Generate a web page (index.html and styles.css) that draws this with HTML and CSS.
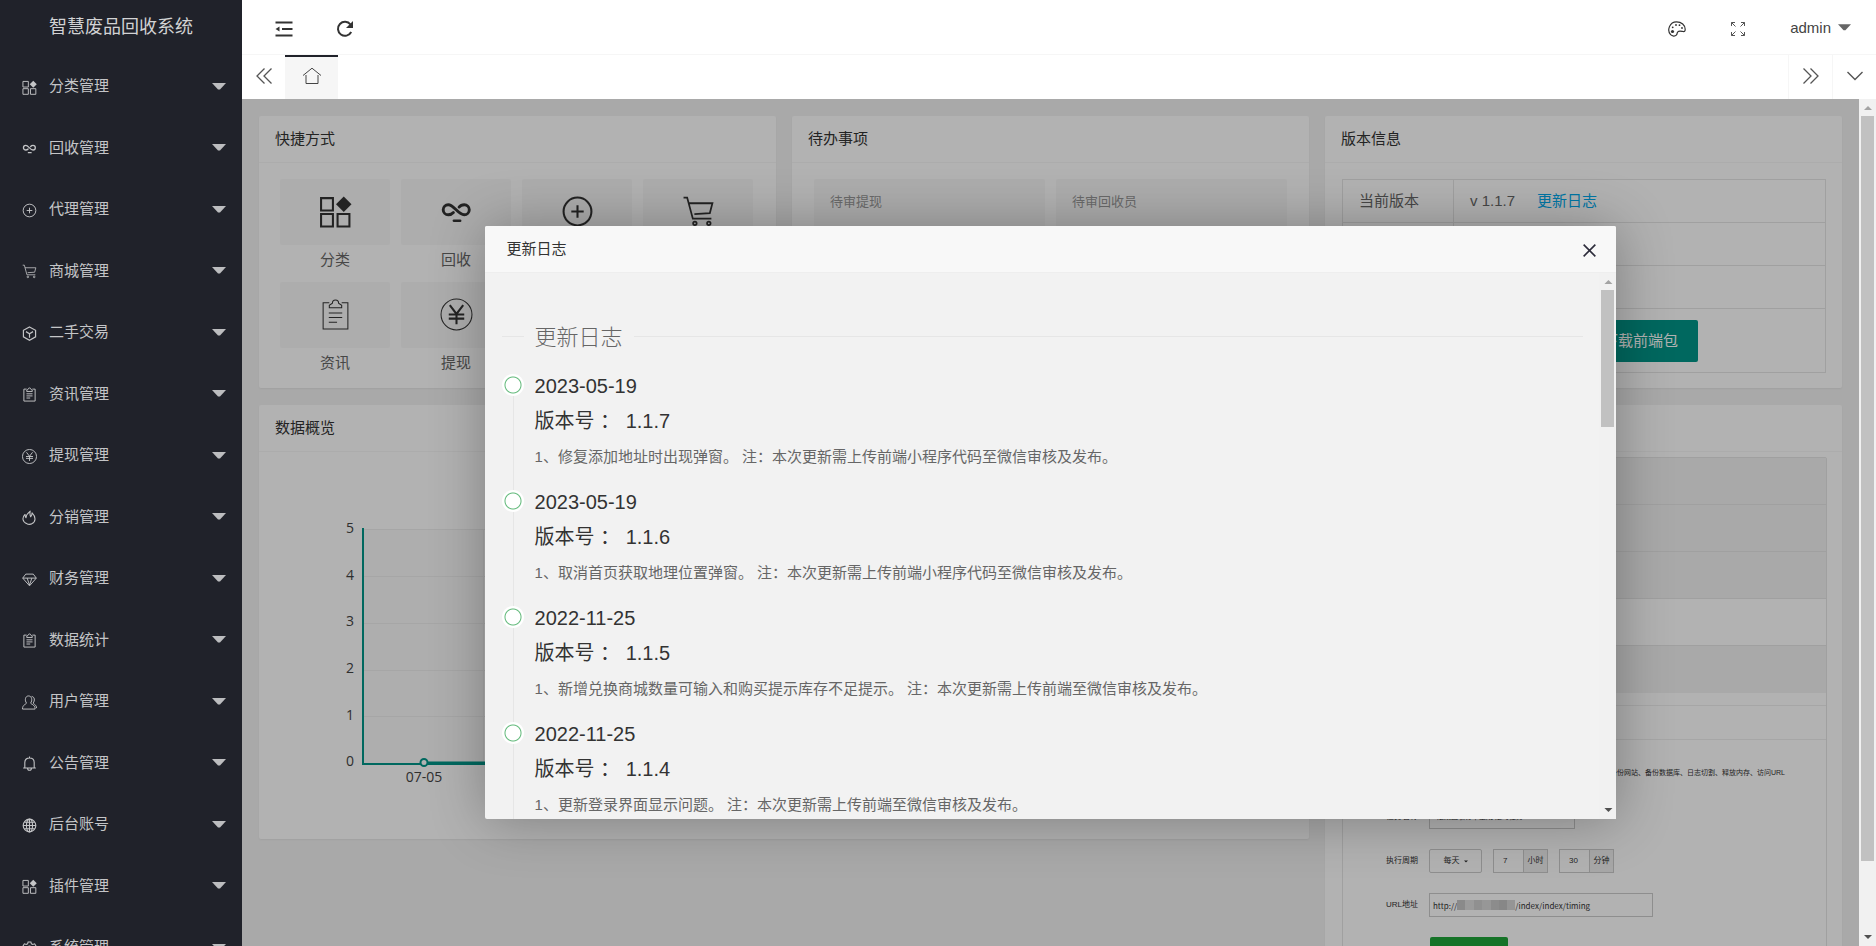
FILE: index.html
```html
<!DOCTYPE html>
<html lang="zh-CN">
<head>
<meta charset="utf-8">
<title>智慧废品回收系统</title>
<link rel="stylesheet" href="styles.css">
</head>
<body>
<svg class="sprite" aria-hidden="true">
  <symbol id="i-grid" viewBox="0 0 32 32"><g fill="none" stroke="currentColor" stroke-width="2"><path d="M2 3h11.500v12h-11.500zM2 18.500h11.500v12h-11.500zM18 18.500h11.500v12h-11.500z"/></g><path fill="currentColor" d="M24 1.500l7.500 7.500-7.500 7.500-7.500-7.500z"/></symbol>
  <symbol id="i-loop" viewBox="0 0 32 32"><path fill="none" stroke="currentColor" stroke-width="2.800" stroke-linecap="round" d="M13 17c-1.500 1.700-3 2.200-5 2.200a4.900 4.900 0 0 1 0-9.800c5.500 0 9.500 9.800 15.500 9.800a4.900 4.900 0 0 0 0-9.800c-2.200 0-3.700.6-5 2.300"/><path stroke="currentColor" stroke-width="2.600" stroke-linecap="round" d="M13.500 25h6"/></symbol>
  <symbol id="i-plus" viewBox="0 0 32 32"><g fill="none" stroke="currentColor" stroke-width="2"><circle cx="16" cy="16" r="13.500"/><path d="M16 10v12M10 16h12"/></g></symbol>
  <symbol id="i-cart" viewBox="0 0 32 32"><g fill="none" stroke="currentColor" stroke-width="1.700"><path d="M1.500 2.500h3.500l5.500 20.500h18M6.500 8h23l-2.500 9.500-15 1"/><circle cx="12.500" cy="27.500" r="1.700"/><circle cx="26" cy="27.500" r="1.700"/></g></symbol>
  <symbol id="i-cube" viewBox="0 0 32 32"><g fill="none" stroke="currentColor" stroke-width="2.500"><path d="M16 2l13 7.200v14l-13 7.300-13-7.300v-14z"/><path d="M8.500 12l7.500 4.500 7.500-4.500M16 16.500v8.500"/></g></symbol>
  <symbol id="i-note" viewBox="0 0 32 32"><g fill="none" stroke="currentColor"><path d="M10 4.500h-6v25.500h24v-25.500h-6M10 9.500v-2.500l3-2c0-4 6-4 6 0l3 2v2.500zM9.500 14.500h13M9.500 19h13M9.500 23.500h8"/></g></symbol>
  <symbol id="i-yen" viewBox="0 0 32 32"><circle cx="16" cy="16" r="15" fill="none" stroke="currentColor"/><path fill="none" stroke="currentColor" stroke-width="2" d="M9.500 7l6.500 8.500 6.500-8.500M8.500 16h15M8.500 20h15M16 15v10.500"/></symbol>
  <symbol id="i-fire" viewBox="0 0 32 32"><path fill="none" stroke="currentColor" stroke-width="2.300" stroke-linejoin="round" d="M11 29.500c-11-4-11-14-4.500-20 0 3 .5 5 2 7 .5-5 4-10 9-14-1 4-.5 8 1 12 2-2 3-5 3-8.500 9 9 8 20-1 23.500M10 29.500c4 1.500 8 1.500 11.500 0"/></symbol>
  <symbol id="i-gem" viewBox="0 0 32 32"><path fill="none" stroke="currentColor" stroke-width="2" stroke-linejoin="round" d="M8 4.500h16l6.500 8.500-14.500 16.500-14.500-16.500zM1.500 13h29M11 13l5 15 5-15"/></symbol>
  <symbol id="i-users" viewBox="0 0 32 32"><path fill="none" stroke="currentColor" stroke-width="2" d="M9.500 17c-4-5-3-15 4.500-15s8.500 10 4.500 15c0 3 9.500 3 9.500 13h-27c0-10 8.500-10 8.500-13zM20.500 3c7 1 7 9 3.500 14 0 3 7 3 7 11"/></symbol>
  <symbol id="i-bell" viewBox="0 0 32 32"><path fill="none" stroke="currentColor" stroke-width="2.300" d="M2.500 25.500h27M6 25v-11c0-13 20-13 20 0v11M16 1v3M12 26c0 6 8 6 8 0"/></symbol>
  <symbol id="i-globe" viewBox="0 0 32 32"><g fill="none" stroke="currentColor" stroke-width="2.400"><circle cx="16" cy="16" r="13.500"/><ellipse cx="16" cy="16" rx="6.500" ry="13.500"/><path d="M16 2.500v27M2.500 16h27M5 9h22M5 23h22"/></g></symbol>
  <symbol id="i-gear" viewBox="0 0 32 32"><g fill="none" stroke="currentColor" stroke-width="2.300"><path d="M13 2h6l1 4 3 1.500 4-1.500 3 5-3 3v4l3 3-3 5-4-1.500-3 1.500-1 4h-6l-1-4-3-1.500-4 1.500-3-5 3-3v-4l-3-3 3-5 4 1.500 3-1.500z"/><circle cx="16" cy="16" r="5"/></g></symbol>
  <symbol id="i-caret" viewBox="0 0 14 7"><path fill="currentColor" d="M0 0h14l-6 6.500h-2z"/></symbol>
  <symbol id="i-indent" viewBox="0 0 18 16"><path fill="none" stroke="currentColor" stroke-width="2" d="M.5 1.500h17M7 8h10.500M.5 14.500h17"/><path fill="currentColor" d="M.5 8l4-2.500v5z"/></symbol>
  <symbol id="i-refresh" viewBox="0 0 18 18"><path fill="none" stroke="currentColor" stroke-width="2" d="M15.200 12a7 7 0 1 1-.7-7.500"/><path fill="currentColor" d="M17 1v7h-7z"/></symbol>
  <symbol id="i-palette" viewBox="0 0 18 16"><path fill="none" stroke="currentColor" stroke-width="1.200" d="M8.500.8c5 0 8.700 3.500 8.700 7.500 0 2-.8 2.500-2.200 2.200-2.500-.5-4-1-5.200.3-1 1.200-.3 2.200-1.500 3.400-1.300 1.300-4 1.200-5.700-.5-4-4.300-1-12.900 5.900-12.900z"/><g fill="currentColor"><circle cx="4.500" cy="10.500" r="1.600"/><circle cx="4.700" cy="6.300" r=".9"/><circle cx="8" cy="4" r=".9"/><circle cx="11.500" cy="4.200" r=".9"/><circle cx="14" cy="7" r=".9"/></g></symbol>
  <symbol id="i-full" viewBox="0 0 16 16"><path fill="none" stroke="currentColor" d="M1.500 5v-3.500h3.500M1.500 1.500l4 4M11 1.500h3.500v3.500M14.500 1.500l-4 4M1.500 11v3.500h3.500M1.500 14.500l4-4M11 14.500h3.500v-3.500M14.500 14.500l-4-4"/></symbol>
  <symbol id="i-left" viewBox="0 0 16 16"><path fill="none" stroke="currentColor" stroke-width="1.300" d="M8.500.5l-7.500 7.500 7.500 7.500M15.500.5l-7.500 7.500 7.500 7.500"/></symbol>
  <symbol id="i-right" viewBox="0 0 16 16"><path fill="none" stroke="currentColor" stroke-width="1.300" d="M.5.5l7.500 7.500-7.500 7.500M7.500.5l7.500 7.500-7.500 7.500"/></symbol>
  <symbol id="i-down" viewBox="0 0 16 16"><path fill="none" stroke="currentColor" stroke-width="1.400" d="M.5 4l7.500 7.500 7.500-7.500"/></symbol>
  <symbol id="i-home" viewBox="0 0 18 18"><path fill="none" stroke="currentColor" d="M0 8.500l9-7.300 9 7.300M3 8v8.500h12v-8.500"/></symbol>
  <symbol id="i-close" viewBox="0 0 12 12"><path fill="none" stroke="currentColor" stroke-width="1.500" d="M.6.600l10.800 10.800M11.400.600l-10.800 10.800"/></symbol>
</svg>

<div class="app">
  <aside class="side">
    <h1 class="brand">智慧废品回收系统</h1>
    <nav>
      <ul class="menu">
        <li><a href="#"><svg class="mi"><use href="#i-grid"/></svg>分类管理<svg class="caret"><use href="#i-caret"/></svg></a></li>
        <li><a href="#"><svg class="mi"><use href="#i-loop"/></svg>回收管理<svg class="caret"><use href="#i-caret"/></svg></a></li>
        <li><a href="#"><svg class="mi"><use href="#i-plus"/></svg>代理管理<svg class="caret"><use href="#i-caret"/></svg></a></li>
        <li><a href="#"><svg class="mi"><use href="#i-cart"/></svg>商城管理<svg class="caret"><use href="#i-caret"/></svg></a></li>
        <li><a href="#"><svg class="mi"><use href="#i-cube"/></svg>二手交易<svg class="caret"><use href="#i-caret"/></svg></a></li>
        <li><a href="#"><svg class="mi"><use href="#i-note"/></svg>资讯管理<svg class="caret"><use href="#i-caret"/></svg></a></li>
        <li><a href="#"><svg class="mi"><use href="#i-yen"/></svg>提现管理<svg class="caret"><use href="#i-caret"/></svg></a></li>
        <li><a href="#"><svg class="mi"><use href="#i-fire"/></svg>分销管理<svg class="caret"><use href="#i-caret"/></svg></a></li>
        <li><a href="#"><svg class="mi"><use href="#i-gem"/></svg>财务管理<svg class="caret"><use href="#i-caret"/></svg></a></li>
        <li><a href="#"><svg class="mi"><use href="#i-note"/></svg>数据统计<svg class="caret"><use href="#i-caret"/></svg></a></li>
        <li><a href="#"><svg class="mi"><use href="#i-users"/></svg>用户管理<svg class="caret"><use href="#i-caret"/></svg></a></li>
        <li><a href="#"><svg class="mi"><use href="#i-bell"/></svg>公告管理<svg class="caret"><use href="#i-caret"/></svg></a></li>
        <li><a href="#"><svg class="mi"><use href="#i-globe"/></svg>后台账号<svg class="caret"><use href="#i-caret"/></svg></a></li>
        <li><a href="#"><svg class="mi"><use href="#i-grid"/></svg>插件管理<svg class="caret"><use href="#i-caret"/></svg></a></li>
        <li><a href="#"><svg class="mi"><use href="#i-gear"/></svg>系统管理<svg class="caret"><use href="#i-caret"/></svg></a></li>
      </ul>
    </nav>
  </aside>

  <div class="main">
    <header class="top">
      <button class="tool" aria-label="侧边伸缩"><svg class="ti"><use href="#i-indent"/></svg></button>
      <button class="tool" aria-label="刷新"><svg class="ti"><use href="#i-refresh"/></svg></button>
      <span class="spring"></span>
      <button class="tool" aria-label="主题"><svg class="ti"><use href="#i-palette"/></svg></button>
      <button class="tool" aria-label="全屏"><svg class="ti small"><use href="#i-full"/></svg></button>
      <button class="user">admin<svg class="caret"><use href="#i-caret"/></svg></button>
    </header>
    <div class="tabs">
      <button class="tabctl" aria-label="向左"><svg class="tci"><use href="#i-left"/></svg></button>
      <button class="tab" aria-label="首页"><svg class="home"><use href="#i-home"/></svg></button>
      <span class="spring"></span>
      <button class="tabctl line" aria-label="向右"><svg class="tci"><use href="#i-right"/></svg></button>
      <button class="tabctl line" aria-label="更多"><svg class="tci"><use href="#i-down"/></svg></button>
    </div>

    <div class="view">
      <div class="stage">
        <main class="cards">
          <section class="card">
            <h2>快捷方式</h2>
            <div class="shortcuts">
              <a href="#"><span class="tile"><svg><use href="#i-grid"/></svg></span>分类</a>
              <a href="#"><span class="tile"><svg><use href="#i-loop"/></svg></span>回收</a>
              <a href="#"><span class="tile"><svg><use href="#i-plus"/></svg></span>代理</a>
              <a href="#"><span class="tile"><svg><use href="#i-cart"/></svg></span>商城</a>
              <a href="#"><span class="tile"><svg><use href="#i-note"/></svg></span>资讯</a>
              <a href="#"><span class="tile"><svg><use href="#i-yen"/></svg></span>提现</a>
            </div>
          </section>
          <section class="card">
            <h2>待办事项</h2>
            <div class="todos">
              <a href="#">待审提现</a>
              <a href="#">待审回收员</a>
            </div>
          </section>
          <section class="card">
            <h2>版本信息</h2>
            <div class="version">
              <table>
                <tr><td class="key">当前版本</td><td>v 1.1.7<a href="#">更新日志</a></td></tr>
                <tr><td></td><td></td></tr>
                <tr><td></td><td></td></tr>
                <tr class="tall"><td></td><td><button class="download">下载前端包</button></td></tr>
              </table>
            </div>
          </section>
          <section class="card wide">
            <h2>数据概览</h2>
            <svg class="chart" role="img" aria-label="数据概览">
              <g class="bands"><rect x="104" y="77" width="120" height="235"/><rect x="344" y="77" width="120" height="235"/><rect x="584" y="77" width="120" height="235"/></g>
              <g class="gridlines"><path d="M104 77.500h844M104 124.500h844M104 171.500h844M104 218.500h844M104 264.500h844M224.500 77v235M344.500 77v235"/></g>
              <path class="axis" d="M104 76v236h844"/>
              <path class="series" d="M165 311h722"/>
              <circle class="dot" cx="165" cy="310.500" r="3.500"/>
              <g class="ylabels"><text x="95" y="81">5</text><text x="95" y="128">4</text><text x="95" y="174">3</text><text x="95" y="221">2</text><text x="95" y="268">1</text><text x="95" y="314">0</text></g>
              <text class="xlabel" x="165" y="330">07-05</text>
            </svg>
          </section>
          <section class="card">
            <h2></h2>
            <div class="panelwrap">
              <div class="panel">
                <div class="bar"></div>
                <div class="bar"></div>
                <div class="bar"></div>
                <div class="bar open"></div>
                <div class="bar"></div>
                <form class="task">
                  <div class="taskhead"></div>
                  <p class="kinds">备份网站、备份数据库、日志切割、释放内存、访问URL</p>
                  <div class="row"><label for="t-name">任务名称</label><input id="t-name" class="name" type="text" value="定期回收订单生成 定时任务"></div>
                  <div class="row"><label for="t-cycle">执行周期</label><button type="button" id="t-cycle" class="cycle">每天<svg><use href="#i-caret"/></svg></button><span class="unit"><input type="text" aria-label="小时" value="7"><span>小时</span></span><span class="unit"><input type="text" aria-label="分钟" value="30"><span>分钟</span></span></div>
                  <div class="row"><label for="t-url">URL地址</label><span class="url">http://<svg class="mosaic"><rect width="8" height="10" fill="#c6c6c6"/><rect x="8" width="9" height="10" fill="#dedede"/><rect x="17" width="8" height="10" fill="#cecece"/><rect x="25" width="9" height="10" fill="#d9d9d9"/><rect x="34" width="8" height="10" fill="#c9c9c9"/><rect x="42" width="8" height="10" fill="#c2c2c2"/><rect x="50" width="8" height="10" fill="#d6d6d6"/></svg><input id="t-url" type="text" value="/index/index/timing"></span></div>
                  <button type="button" class="run" aria-label="提交"></button>
                </form>
              </div>
            </div>
          </section>
        </main>

        <div class="shade"></div>
        <div class="dialog" role="dialog" aria-labelledby="dlg-title">
          <div class="dialoghead"><h2 id="dlg-title">更新日志</h2><button aria-label="关闭"><svg><use href="#i-close"/></svg></button></div>
          <div class="dialogbody">
            <div class="log">
              <fieldset><legend>更新日志</legend></fieldset>
              <ul class="timeline">
                <li><h3>2023-05-19</h3><h3>版本号 ： 1.1.7</h3><p>1、修复添加地址时出现弹窗。 注：本次更新需上传前端小程序代码至微信审核及发布。</p></li>
                <li><h3>2023-05-19</h3><h3>版本号 ： 1.1.6</h3><p>1、取消首页获取地理位置弹窗。 注：本次更新需上传前端小程序代码至微信审核及发布。</p></li>
                <li><h3>2022-11-25</h3><h3>版本号 ： 1.1.5</h3><p>1、新增兑换商城数量可输入和购买提示库存不足提示。 注：本次更新需上传前端至微信审核及发布。</p></li>
                <li><h3>2022-11-25</h3><h3>版本号 ： 1.1.4</h3><p>1、更新登录界面显示问题。 注：本次更新需上传前端至微信审核及发布。</p></li>
              </ul>
            </div>
            <div class="scroll"><i class="up"></i><i class="thumb short"></i><i class="fill"></i><i class="down"></i></div>
          </div>
        </div>
      </div>
      <div class="scroll"><i class="up"></i><i class="thumb long"></i><i class="fill"></i><i class="down"></i></div>
    </div>
  </div>
</div>
</body>
</html>
```
FILE: styles.css
```css
*, *::before, *::after { box-sizing: border-box; margin: 0; padding: 0; }
body {
  font: 15px/24px "Liberation Sans", "Noto Sans CJK SC", sans-serif;
  color: #333;
  background: #f2f2f2;
}
button, input { font: inherit; color: inherit; background: none; border: 0; }
a { color: inherit; text-decoration: none; }
ul { list-style: none; }
h1, h2, h3 { font-weight: 400; }
.sprite { display: none; }
.spring { flex: 1; }

.app { display: flex; height: 100vh; overflow: hidden; }

/* sidebar */
.side { flex: none; width: 242px; background: #20222a; color: #c4c5c7; overflow: hidden; }
.brand { height: 55px; font-size: 18px; line-height: 55px; text-align: center; color: #d2d3d4; }
.menu li { height: 61px; }
.menu li:nth-child(odd) { height: 62px; }
.menu a { display: flex; align-items: center; height: 100%; padding: 0 16px 0 22px; }
.mi { width: 15px; height: 15px; margin: 2px 12px 0 0; stroke-width: 2px; }
.caret { width: 14px; height: 7px; }
.menu .caret { margin-left: auto; color: #bcbdbf; }

/* top bars */
.main { flex: 1; min-width: 0; display: flex; flex-direction: column; }
.top { display: flex; align-items: center; height: 55px; padding: 0 25px 8px 11px; background: #fff; border-bottom: 1px solid #f6f6f6; }
.top button { height: 46px; padding-top: 9px; }
.tool { width: 61px; }
.ti { width: 18px; height: 18px; vertical-align: middle; }
.ti.small { width: 16px; height: 16px; color: #555; }
.user { display: flex; align-items: center; gap: 7px; margin-left: 22px; color: #444; }
.user .caret { color: #666; width: 13px; }
.tabs { flex: none; display: flex; height: 44px; background: #fff; }
.tabctl { width: 43px; padding-bottom: 2px; display: grid; place-items: center; color: #555; }
.tabctl.line { width: 44px; border-left: 1px solid #f6f6f6; }
.tci { width: 16px; height: 16px; }
.tab { width: 53px; padding-bottom: 4px; display: grid; place-items: center; background: #f6f6f6; border-top: 2px solid #20222a; color: #444; }
.home { width: 18px; height: 18px; }

/* page */
.view { flex: 1; min-height: 0; display: flex; }
.stage { flex: 1; position: relative; overflow: hidden; background: #f2f2f2; }
.cards { display: grid; grid-template-columns: repeat(3, minmax(0, 1fr)); gap: 17px 16px; padding: 17px; align-items: start; }
.card { background: #fff; border-radius: 2px; box-shadow: 0 1px 2px rgba(0, 0, 0, .05); align-self: stretch; }
.card.wide { grid-column: span 2; align-self: start; }
.card > h2 { height: 47px; padding: 0 16px; font-size: 15px; line-height: 46px; border-bottom: 1px solid #f6f6f6; }

.shortcuts { display: grid; grid-template-columns: repeat(4, 1fr); gap: 7px 11px; padding: 16px 23px 10px 21px; }
.shortcuts a { text-align: center; line-height: 30px; color: #666; }
.tile { display: grid; place-items: center; height: 66px; padding-bottom: 1px; background: #f8f8f8; border-radius: 2px; color: #333; }
.tile svg { width: 33px; height: 33px; stroke-width: 1px; }
.todos { display: grid; grid-template-columns: 1fr 1fr; gap: 11px; padding: 16px 22px; }
.todos a { height: 92px; padding: 11px 16px; font-size: 13px; color: #999; background: #f8f8f8; border-radius: 2px; }

.version { padding: 16px 16px 15px 17px; }
.version table { width: 100%; border-collapse: collapse; color: #666; }
.version tr { height: 43px; }
.version .tall { height: 64px; }
.version td { padding: 0 16px; border: 1px solid #e6e6e6; }
.version .key { width: 111px; }
.version td a { margin-left: 22px; color: #01aaed; }
.download { height: 42px; margin-left: 113px; padding: 0 20px; background: #009688; color: #fff; border-radius: 2px; vertical-align: middle; }

.chart { display: block; width: 100%; height: 387px; font: 14px "Open Sans", sans-serif; fill: #444; }
.bands { fill: #fafafa; }
.gridlines { fill: none; stroke: #eee; }
.axis { fill: none; stroke: #009688; stroke-width: 2; }
.series { fill: none; stroke: #009688; stroke-width: 3; }
.chart .dot { fill: #fff; stroke: #009688; stroke-width: 2; }
.ylabels { text-anchor: end; }
.xlabel { text-anchor: middle; }

.panelwrap { padding: 5px 15px 16px 17px; }
.panel { border: 1px solid #e6e6e6; border-radius: 2px; }
.bar { height: 47px; background: #f2f2f2; border-bottom: 1px solid #e6e6e6; }
.bar.open { background: #fff; }
.bar:nth-child(5) { border-bottom: 0; }
.task { display: flex; flex-direction: column; font-size: 7px; line-height: 22px; }
.taskhead { height: 35px; margin-top: 12px; border: solid #eee; border-width: 1px 0; }
.kinds { margin: 22px 0 21px 267px; white-space: nowrap; }
.row { display: flex; height: 24px; margin-bottom: 20px; }
.row label { width: 75px; margin-right: 11px; font-size: 8px; line-height: 24px; text-align: right; }
.name { width: 146px; padding: 0 7px; border: 1px solid #ccc; }
.cycle { display: flex; align-items: center; justify-content: center; gap: 4px; width: 53px; border: 1px solid #ccc; border-radius: 2px; font-size: 8px; }
.cycle svg { width: 4px; height: 3px; }
.unit { display: flex; width: 55px; margin-left: 11px; border: 1px solid #ccc; font-size: 8px; }
.unit input { width: 29px; padding-left: 9px; }
.unit span { flex: 1; text-align: center; background: #f0f0f0; border-left: 1px solid #ccc; }
.url { display: flex; align-items: center; width: 224px; padding-left: 3px; border: 1px solid #ccc; font: 8px "Noto Sans CJK SC", sans-serif; }
.url input { width: 80px; }
.mosaic { width: 58px; height: 10px; }
.run { width: 78px; height: 26px; margin-left: 87px; background: #20a53a; border-radius: 2px; }

/* scroll rails */
.scroll { flex: none; width: 17px; display: flex; flex-direction: column; align-items: center; background: #f1f1f1; }
.scroll .up, .scroll .down { flex: none; width: 17px; height: 17px; background: #a3a3a3; clip-path: polygon(5px 11px, 9px 7px, 13px 11px); }
.scroll .down { background: #505050; clip-path: polygon(5px 6px, 13px 6px, 9px 10px); }
.thumb { width: 13px; background: #c1c1c1; }
.thumb.short { height: 25%; }
.thumb.long { height: 88%; }
.fill { flex: 1; }

/* dialog */
.shade { position: absolute; inset: 0; background: rgba(0, 0, 0, .3); }
.dialog { position: absolute; inset: 15%; display: flex; flex-direction: column; background: #f2f2f2; border-radius: 2px; box-shadow: 1px 1px 55px rgba(0, 0, 0, .3); }
.dialoghead { flex: none; display: flex; justify-content: space-between; height: 47px; padding: 0 20px 0 22px; background: #f8f8f8; border-bottom: 1px solid #eee; border-radius: 2px 2px 0 0; }
.dialoghead h2 { font-size: 15px; line-height: 45px; }
.dialoghead svg { width: 13px; height: 13px; vertical-align: middle; color: #2d2c3b; }
.dialogbody { flex: 1; min-height: 0; display: flex; overflow: hidden; }
.log { flex: 1; padding: 48px 16px 0 17px; overflow: hidden; }
fieldset { border: 0; border-top: 1px solid #e6e6e6; }
legend { margin-left: 22px; padding: 3px 11px 0; font-size: 22px; font-weight: 300; line-height: 28px; color: #666; }
.timeline { margin-top: 17px; }
.timeline li { position: relative; padding: 0 0 11px 33px; }
.timeline li::before { content: ""; position: absolute; left: 11px; top: 6px; width: 1px; height: 100%; background: #e6e6e6; }
.timeline li::after { content: ""; position: absolute; left: 0; top: 5px; width: 22px; height: 22px; border-radius: 50%; background: radial-gradient(circle, #fff 7px, #5fb878 8px, #5fb878 8px, #fff 9px); }
.timeline h3 { font-size: 20px; line-height: 35px; }
.timeline p { line-height: 35px; color: #666; }
```
